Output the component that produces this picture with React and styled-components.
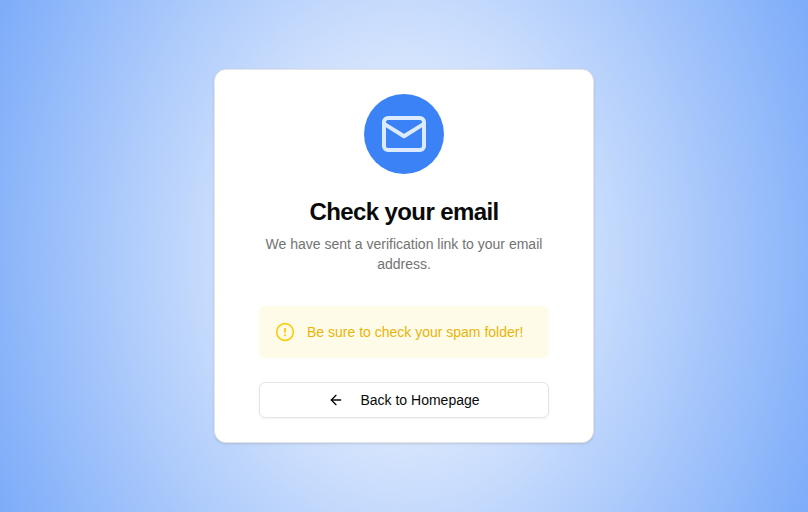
import React from "react";
import styled, { createGlobalStyle } from "styled-components";
import { ArrowLeft } from "lucide-react";

const GlobalStyle = createGlobalStyle`
  *, *::before, *::after { box-sizing: border-box; }
  body { margin: 0; font-family: "Liberation Sans", Arial, sans-serif; color: #0a0a0a; }
`;

const Page = styled.main`
  min-height: 100vh;
  display: flex;
  align-items: center;
  justify-content: center;
  background: radial-gradient(680px 870px at center, #ffffff, #3b82f6);
`;

const Card = styled.section`
  width: 380px;
  height: 374px;
  padding: 24px 44px;
  display: flex;
  flex-direction: column;
  align-items: center;
  background: #fff;
  border: 1px solid #e5e5e5;
  border-radius: 12px;
  box-shadow: 0 1px 3px rgba(0, 0, 0, 0.1), 0 1px 2px -1px rgba(0, 0, 0, 0.1);
`;

const IconCircle = styled.div`
  width: 80px;
  height: 80px;
  flex: none;
  display: grid;
  place-items: center;
  border-radius: 50%;
  background: #3b82f6;
  color: #dbeafe;
`;

const MailSvg = styled.svg`
  width: 48px;
  height: 48px;
`;

const Title = styled.h1`
  margin: 22px 0 0;
  font-size: 24px;
  line-height: 32px;
  font-weight: 700;
  letter-spacing: -0.6px;
`;

const Description = styled.p`
  margin: 6px 0 0;
  font-size: 14px;
  line-height: 20px;
  color: #737373;
  text-align: center;
`;

const Notice = styled.div`
  width: 100%;
  height: 52px;
  margin-top: 32px;
  padding: 0 16px;
  display: flex;
  align-items: center;
  gap: 12px;
  border-radius: 6px;
  background: #fefce8;
  color: #eab308;
  font-size: 14px;
  line-height: 20px;
`;

const AlertSvg = styled.svg`
  width: 20px;
  height: 20px;
  flex: none;
  color: #facc15;
`;

const BackButton = styled.button`
  width: 100%;
  height: 36px;
  margin-top: 24px;
  display: flex;
  align-items: center;
  justify-content: center;
  gap: 16px;
  border: 1px solid #e5e5e5;
  border-radius: 6px;
  background: #fff;
  box-shadow: 0 1px 2px rgba(0, 0, 0, 0.05);
  color: #0a0a0a;
  font: 14px/20px "Liberation Sans", Arial, sans-serif;
`;

function MailIcon() {
  return (
    <MailSvg
      viewBox="0 0 24 24"
      fill="none"
      stroke="currentColor"
      strokeWidth="2"
      strokeLinecap="round"
      strokeLinejoin="round"
      aria-hidden="true"
    >
      <rect x="2" y="4" width="20" height="16" rx="2" />
      <path d="M2.3 7.05 12 13.1l9.7-6.05" />
    </MailSvg>
  );
}

function AlertIcon() {
  return (
    <AlertSvg viewBox="0 0 24 24" fill="none" stroke="currentColor" strokeWidth="2" aria-hidden="true">
      <circle cx="12" cy="12" r="10" />
      <path d="M12 7.2v5.8M12 14.8v2.3" strokeWidth="2.2" />
    </AlertSvg>
  );
}

export default function App() {
  return (
    <Page>
      <GlobalStyle />
      <Card>
        <IconCircle><MailIcon /></IconCircle>
        <Title>Check your email</Title>
        <Description>We have sent a verification link to your email address.</Description>
        <Notice><AlertIcon />Be sure to check your spam folder!</Notice>
        <BackButton><ArrowLeft size={16} />Back to Homepage</BackButton>
      </Card>
    </Page>
  );
}
